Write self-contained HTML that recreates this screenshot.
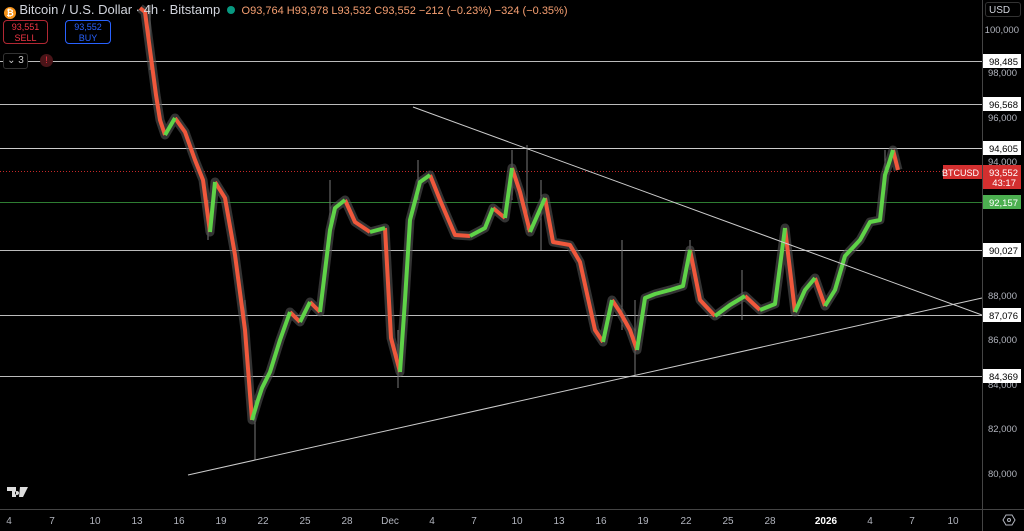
<!DOCTYPE html>
<html><head><meta charset="utf-8"><style>
html,body{margin:0;padding:0;background:#000;width:1024px;height:531px;overflow:hidden;font-family:"Liberation Sans",sans-serif}
svg{position:absolute;left:0;top:0}
.hdr{position:absolute;left:4px;top:2px;color:#d1d4dc;font-size:12px;white-space:nowrap}
</style></head><body>
<svg width="1024" height="531" xmlns="http://www.w3.org/2000/svg" font-family="Liberation Sans">
<g stroke-width="1">
<line x1="0" x2="982" y1="61.5" y2="61.5" stroke="#bbb"/>
<line x1="0" x2="982" y1="104.5" y2="104.5" stroke="#bbb"/>
<line x1="0" x2="982" y1="148.5" y2="148.5" stroke="#ccc"/>
<line x1="0" x2="982" y1="202.5" y2="202.5" stroke="#2e7d32"/>
<line x1="0" x2="982" y1="250.5" y2="250.5" stroke="#bbb"/>
<line x1="0" x2="982" y1="315.5" y2="315.5" stroke="#bbb"/>
<line x1="0" x2="982" y1="376.5" y2="376.5" stroke="#bbb"/>
<line x1="0" x2="982" y1="171.5" y2="171.5" stroke="#c62828" stroke-dasharray="1 2"/>
</g>
<path d="M150,5V70 M255,400V460 M398,330V388 M512,150V200 M527,145V230 M622,240V330 M635,300V375 M245,300V350 M208,200V240 M330,180V240 M418,160V200 M541,180V250 M690,240V270 M742,270V320 M885,150V190" stroke="#777" fill="none"/>
<path fill="none" stroke="#555" stroke-opacity="0.6" stroke-width="9" stroke-linejoin="round" d="M140,8L145,12L150,50L156,95L160,120L165,135L175,118L185,132L195,160L203,180L210,232L215,182L225,198L235,255L245,330L252,420L258,400L262,388L270,372L280,340L290,312L300,322L310,302L320,312L330,230L335,208L345,200L355,222L370,232L385,228L391,338L400,372L405,300L410,220L420,182L430,175L440,200L455,235L470,236L485,228L493,208L505,218L512,168L520,192L530,232L545,198L553,242L570,245L580,262L595,330L603,342L612,300L620,312L630,330L637,350L645,298L655,294L670,290L683,286L690,250L700,300L715,316L730,305L745,296L760,310L775,304L785,228L795,312L805,290L815,278L825,306L835,290L845,256L860,240L870,222L880,220L885,175L890,160L893,150L898,170"/>
<path fill="none" stroke="#f0583c" stroke-width="4" stroke-linejoin="round" d="M140,8L145,12L150,50L156,95L160,120L165,135 M175,118L185,132L195,160L203,180L210,232 M215,182L225,198L235,255L245,330L252,420 M290,312L300,322 M310,302L320,312 M345,200L355,222L370,232 M385,228L391,338L400,372 M430,175L440,200L455,235L470,236 M493,208L505,218 M512,168L520,192L530,232 M545,198L553,242L570,245L580,262L595,330L603,342 M612,300L620,312L630,330L637,350 M690,250L700,300L715,316 M745,296L760,310 M785,228L795,312 M815,278L825,306 M893,150L898,170"/>
<path fill="none" stroke="#5fd348" stroke-width="4" stroke-linejoin="round" d="M165,135L175,118 M210,232L215,182 M252,420L258,400L262,388L270,372L280,340L290,312 M300,322L310,302 M320,312L330,230L335,208L345,200 M370,232L385,228 M400,372L405,300L410,220L420,182L430,175 M470,236L485,228L493,208 M505,218L512,168 M530,232L545,198 M603,342L612,300 M637,350L645,298L655,294L670,290L683,286L690,250 M715,316L730,305L745,296 M760,310L775,304L785,228 M795,312L805,290L815,278 M825,306L835,290L845,256L860,240L870,222L880,220L885,175L890,160L893,150"/>
<line x1="413" y1="107" x2="982" y2="315" stroke="#ccc"/>
<line x1="188" y1="475" x2="982" y2="298" stroke="#ccc"/>
<line x1="982.5" x2="982.5" y1="0" y2="531" stroke="#444"/>
<line x1="0" x2="1024" y1="509.5" y2="509.5" stroke="#444"/>
<g fill="#b2b5be" font-size="9.5" text-anchor="end">
<text x="1019" y="33">100,000</text><text x="1017" y="76">98,000</text><text x="1017" y="121">96,000</text><text x="1017" y="165">94,000</text><text x="1017" y="299">88,000</text><text x="1017" y="343">86,000</text><text x="1017" y="388">84,000</text><text x="1017" y="432">82,000</text><text x="1017" y="477">80,000</text>
</g>
<g font-size="9.5" text-anchor="end">
<rect x="983" y="54" width="38" height="14" fill="#fff"/><text x="1018" y="65">98,485</text>
<rect x="983" y="97" width="38" height="14" fill="#fff"/><text x="1018" y="108">96,568</text>
<rect x="983" y="141" width="38" height="14" fill="#fff"/><text x="1018" y="152">94,605</text>
<rect x="983" y="243" width="38" height="14" fill="#fff"/><text x="1018" y="254">90,027</text>
<rect x="983" y="308" width="38" height="14" fill="#fff"/><text x="1018" y="319">87,076</text>
<rect x="983" y="369" width="38" height="14" fill="#fff"/><text x="1018" y="380">84,369</text>
<rect x="983" y="195" width="38" height="14" fill="#4caf50"/><text x="1018" y="206" fill="#fff">92,157</text>
<rect x="943" y="165" width="39" height="14" fill="#d32f2f"/><text x="979" y="176" fill="#fff" font-size="9">BTCUSD</text>
<rect x="983" y="165" width="38" height="24" fill="#d32f2f"/><text x="1018" y="176" fill="#fff">93,552</text><text x="1016" y="186" fill="#fff">43:17</text>
</g>
<g fill="#b2b5be" font-size="10" text-anchor="middle">
<text x="9" y="524">4</text><text x="52" y="524">7</text><text x="95" y="524">10</text><text x="137" y="524">13</text><text x="179" y="524">16</text><text x="221" y="524">19</text><text x="263" y="524">22</text><text x="305" y="524">25</text><text x="347" y="524">28</text><text x="390" y="524">Dec</text><text x="432" y="524">4</text><text x="474" y="524">7</text><text x="517" y="524">10</text><text x="559" y="524">13</text><text x="601" y="524">16</text><text x="643" y="524">19</text><text x="686" y="524">22</text><text x="728" y="524">25</text><text x="770" y="524">28</text><text x="826" y="524" fill="#fff" font-weight="bold">2026</text><text x="870" y="524">4</text><text x="912" y="524">7</text><text x="953" y="524">10</text>
</g>
<polygon points="1006,515 1012,515 1015,520 1012,525 1006,525 1003,520" fill="none" stroke="#b2b5be"/><circle cx="1009" cy="520" r="1.5" fill="none" stroke="#b2b5be"/>
<path d="M7 487h9v10h-4v-6h-5z M17 491a2 2 0 1 0 0.01 0z M20 487h8l-5 10h-4z" fill="#ddd"/>
</svg>
<div class="hdr"><span style="display:inline-block;width:12px;height:12px;border-radius:6px;background:#f7931a;vertical-align:-2px;color:#fff;font-size:9px;text-align:center;line-height:12px;font-weight:bold">₿</span> <span style="font-size:13px">Bitcoin / U.S. Dollar · 4h · Bitstamp</span> &nbsp;<span style="display:inline-block;width:8px;height:8px;border-radius:4px;background:#089981;vertical-align:0"></span> &nbsp;<span style="font-size:11px;color:#f7a072">O93,764 H93,978 L93,532 C93,552 −212 (−0.23%) −324 (−0.35%)</span></div>
<div style="position:absolute;left:3px;top:20px;width:45px;height:24px;border:1px solid #b22833;border-radius:4px;color:#f23645;font-size:9px;text-align:center;line-height:11px;padding-top:1px;box-sizing:border-box;background:#000">93,551<br>SELL</div>
<div style="position:absolute;left:65px;top:20px;width:46px;height:24px;border:1px solid #2962ff;border-radius:4px;color:#2962ff;font-size:9px;text-align:center;line-height:11px;padding-top:1px;box-sizing:border-box;background:#000">93,552<br>BUY</div>
<div style="position:absolute;left:3px;top:53px;width:23px;height:14px;border:1px solid #333;border-radius:3px;color:#ccc;font-size:10px;line-height:13px;text-align:center;background:#000">⌄ 3</div>
<div style="position:absolute;left:40px;top:54px;width:13px;height:13px;border-radius:7px;background:#4a1418;color:#f23645;font-size:9px;line-height:13px;text-align:center">!</div>
<div style="position:absolute;left:985px;top:2px;width:36px;height:15px;border:1px solid #333;border-radius:3px;color:#d1d4dc;font-size:10px;line-height:15px;padding-left:3px;box-sizing:border-box">USD</div>
</body></html>
